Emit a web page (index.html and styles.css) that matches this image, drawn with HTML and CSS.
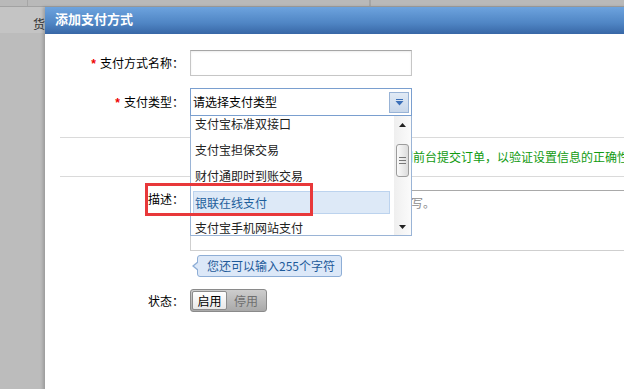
FILE: index.html
```html
<!DOCTYPE html>
<html lang="zh-CN">
<head>
    <meta charset="UTF-8">
    <title>添加支付方式</title>
    <link rel="stylesheet" href="styles.css">
</head>
<body>
    <div class="page">
        <div class="page-top">
            <span class="page-col first"></span>
            <span class="page-col second"></span>
            <span class="page-col"></span>
        </div>
        <div class="page-head">货品列表</div>
    </div>

    <div class="dialog">
        <div class="dialog-title">添加支付方式</div>
        <div class="dialog-body">
            <div class="row">
                <label class="label"><span class="req">*</span>支付方式名称：</label>
                <input class="text" type="text">
            </div>

            <div class="row">
                <label class="label"><span class="req">*</span>支付类型：</label>
                <div class="combo">
                    <div class="combo-box">
                        <span>请选择支付类型</span>
                        <span class="combo-btn">
                            <svg width="9" height="7" viewBox="0 0 9 7"><rect x="1" y="0" width="7" height="1" fill="#3b6fb8"/><path d="M0.5 2 L8.5 2 L4.5 6.5 Z" fill="#3b6fb8"/></svg>
                        </span>
                    </div>
                    <div class="combo-list">
                        <div class="combo-items">
                            <div class="opt">支付宝标准双接口</div>
                            <div class="opt">支付宝担保交易</div>
                            <div class="opt">财付通即时到账交易</div>
                            <div class="opt on">银联在线支付</div>
                            <div class="opt">支付宝手机网站支付</div>
                        </div>
                        <div class="scroll">
                            <span class="scroll-btn">
                                <svg width="7" height="4" viewBox="0 0 7 4"><path d="M0 4 L3.5 0 L7 4 Z" fill="#222"/></svg>
                            </span>
                            <span class="thumb"><i></i><i></i><i></i></span>
                            <span class="scroll-fill"></span>
                            <span class="scroll-btn">
                                <svg width="7" height="4" viewBox="0 0 7 4"><path d="M0 0 L7 0 L3.5 4 Z" fill="#222"/></svg>
                            </span>
                        </div>
                    </div>
                </div>
            </div>

            <div class="tip">到前台提交订单，以验证设置信息的正确性。</div>

            <div class="row row-top">
                <label class="label label-area">描述：</label>
                <textarea class="area" placeholder="对该支付方式进行简要的描述，可以不填写。"></textarea>
            </div>

            <div class="row">
                <span class="label"></span>
                <div class="bubble">您还可以输入255个字符</div>
            </div>

            <div class="row row-state">
                <label class="label">状态：</label>
                <div class="switch">
                    <span class="seg on">启用</span>
                    <span class="seg">停用</span>
                </div>
            </div>
        </div>
        <div class="mark"></div>
    </div>
</body>
</html>
```

FILE: styles.css
```css
body {
    margin: 0;
    height: 389px;
    overflow: hidden;
    background-color: #bcbcbc;
    font-family: "Noto Sans CJK SC", "Liberation Sans", sans-serif;
    font-size: 12px;
    color: #000;
}

.page-top {
    display: flex;
    height: 6px;
    background-color: #b9b9b9;
    border-bottom: 1px solid #a2a2a2;
}

.page-col {
    border-right: 1px solid #a6a6a6;
}

.page-col.first {
    width: 27px;
}

.page-col.second {
    width: 341px;
}

.page-head {
    height: 26px;
    padding: 0 0 0 33px;
    line-height: 33px;
    background-color: #c4c4c4;
    color: #333;
    white-space: nowrap;
}

.dialog {
    position: absolute;
    left: 45px;
    top: 7px;
    width: 600px;
    height: 400px;
    background-color: #fff;
    box-shadow: -2px 0 3px rgba(0, 0, 0, 0.18);
}

.dialog-title {
    height: 27px;
    padding-left: 10px;
    line-height: 23px;
    font-size: 13px;
    font-weight: bold;
    color: #fff;
    background: linear-gradient(#6da3de, #4f85c4 60%, #3867a6);
}

.dialog-body {
    padding-top: 16px;
}

.row {
    display: flex;
    align-items: center;
}

.row + .row {
    margin-top: 12px;
}

.row-top {
    align-items: flex-start;
}

.label {
    width: 139px;
    margin-right: 6px;
    text-align: right;
    line-height: 18px;
    flex-shrink: 0;
}

.req {
    color: #e00;
    font-family: "Liberation Sans", sans-serif;
    font-weight: bold;
    margin-right: 4px;
}

.text {
    box-sizing: border-box;
    width: 222px;
    height: 26px;
    margin: 0;
    border: 1px solid #c6c6c6;
    border-top-color: #a6a6a6;
    box-shadow: inset 0 1px 2px rgba(0, 0, 0, 0.08);
}

.combo {
    position: relative;
    z-index: 2;
}

.combo-box {
    box-sizing: border-box;
    width: 222px;
    height: 28px;
    padding: 0 2px 0 2px;
    border: 1px solid #7a9fcf;
    display: flex;
    align-items: center;
    justify-content: space-between;
    line-height: 18px;
    background-color: #fff;
}

.combo-btn {
    box-sizing: border-box;
    width: 20px;
    height: 21px;
    border: 1px solid #98b3d6;
    background: linear-gradient(#e1eaf5, #c8d7ea);
    display: flex;
    align-items: center;
    justify-content: center;
}

.combo-list {
    position: absolute;
    top: 100%;
    left: 0;
    box-sizing: border-box;
    width: 222px;
    height: 120px;
    border: 1px solid #9ab4d6;
    border-top: none;
    background-color: #fff;
    display: flex;
    overflow: hidden;
}

.combo-items {
    flex: 1;
    overflow: hidden;
}

.opt {
    height: 26px;
    line-height: 26px;
    padding-left: 4px;
    color: #222;
    white-space: nowrap;
}

.opt:first-child {
    margin-top: -5px;
}

.opt.on {
    height: 21px;
    line-height: 21px;
    margin: 2px 4px 1px 2px;
    padding-left: 1px;
    border: 1px solid #bcd3ee;
    background-color: #dde9f7;
    color: #1d5f9c;
}

.scroll {
    width: 17px;
    display: flex;
    flex-direction: column;
    align-items: center;
    background: linear-gradient(to right, #efefef, #fbfbfb);
}

.scroll-btn {
    height: 17px;
    display: flex;
    align-items: center;
    justify-content: center;
}

.thumb {
    box-sizing: border-box;
    width: 13px;
    height: 33px;
    margin-top: 11px;
    border: 1px solid #9c9c9c;
    border-radius: 3px;
    background: linear-gradient(to right, #fafafa, #dcdcdc);
    display: flex;
    flex-direction: column;
    align-items: center;
    justify-content: center;
    gap: 2px;
}

.thumb i {
    width: 7px;
    height: 1px;
    background-color: #777;
}

.scroll-fill {
    flex: 1;
}

.tip {
    box-sizing: border-box;
    height: 40px;
    margin: 21px 0 0 15px;
    padding-left: 341px;
    border-top: 1px solid #dadada;
    border-bottom: 1px solid #dadada;
    line-height: 38px;
    color: #109a10;
    white-space: nowrap;
    overflow: hidden;
}

.tip + .row {
    margin-top: 13px;
}

.area {
    box-sizing: border-box;
    width: 440px;
    height: 61px;
    margin: 0;
    padding: 5px 4px;
    border: 1px solid #cfcfcf;
    border-top-color: #a9a9a9;
    resize: none;
    font-family: "Noto Sans CJK SC", sans-serif;
    font-size: 12px;
    line-height: 14px;
}

.area::placeholder {
    color: #8c8c8c;
}

.row-top + .row {
    margin-top: 4px;
}

.bubble {
    position: relative;
    box-sizing: border-box;
    height: 22px;
    margin-left: 7px;
    padding: 0 6px 0 9px;
    border: 1px solid #8eaed6;
    border-radius: 3px;
    background-color: #dce8f8;
    color: #1e5a9a;
    line-height: 20px;
}

.bubble::before,
.bubble::after {
    content: "";
    position: absolute;
    top: 5px;
    border-style: solid;
    border-color: transparent;
}

.bubble::before {
    left: -6px;
    border-width: 5px 6px 5px 0;
    border-right-color: #8eaed6;
}

.bubble::after {
    left: -4px;
    top: 6px;
    border-width: 4px 5px 4px 0;
    border-right-color: #dce8f8;
}

.switch {
    box-sizing: border-box;
    width: 77px;
    height: 23px;
    padding: 1px;
    border: 1px solid #8a8a8a;
    border-radius: 3px;
    background: linear-gradient(#cdcdcd, #a9a9a9);
    display: flex;
}

.seg {
    flex: 1;
    text-align: center;
    line-height: 19px;
    color: #6f6f6f;
}

.seg.on {
    flex: 0 0 35px;
    box-sizing: border-box;
    border: 1px solid #8c8c8c;
    border-radius: 2px;
    background: linear-gradient(#fff, #e8e8e8);
    line-height: 17px;
    color: #000;
}

.mark {
    position: absolute;
    left: 100px;
    top: 176px;
    z-index: 3;
    box-sizing: border-box;
    width: 168px;
    height: 33px;
    border: 3px solid #e8383a;
}
```
